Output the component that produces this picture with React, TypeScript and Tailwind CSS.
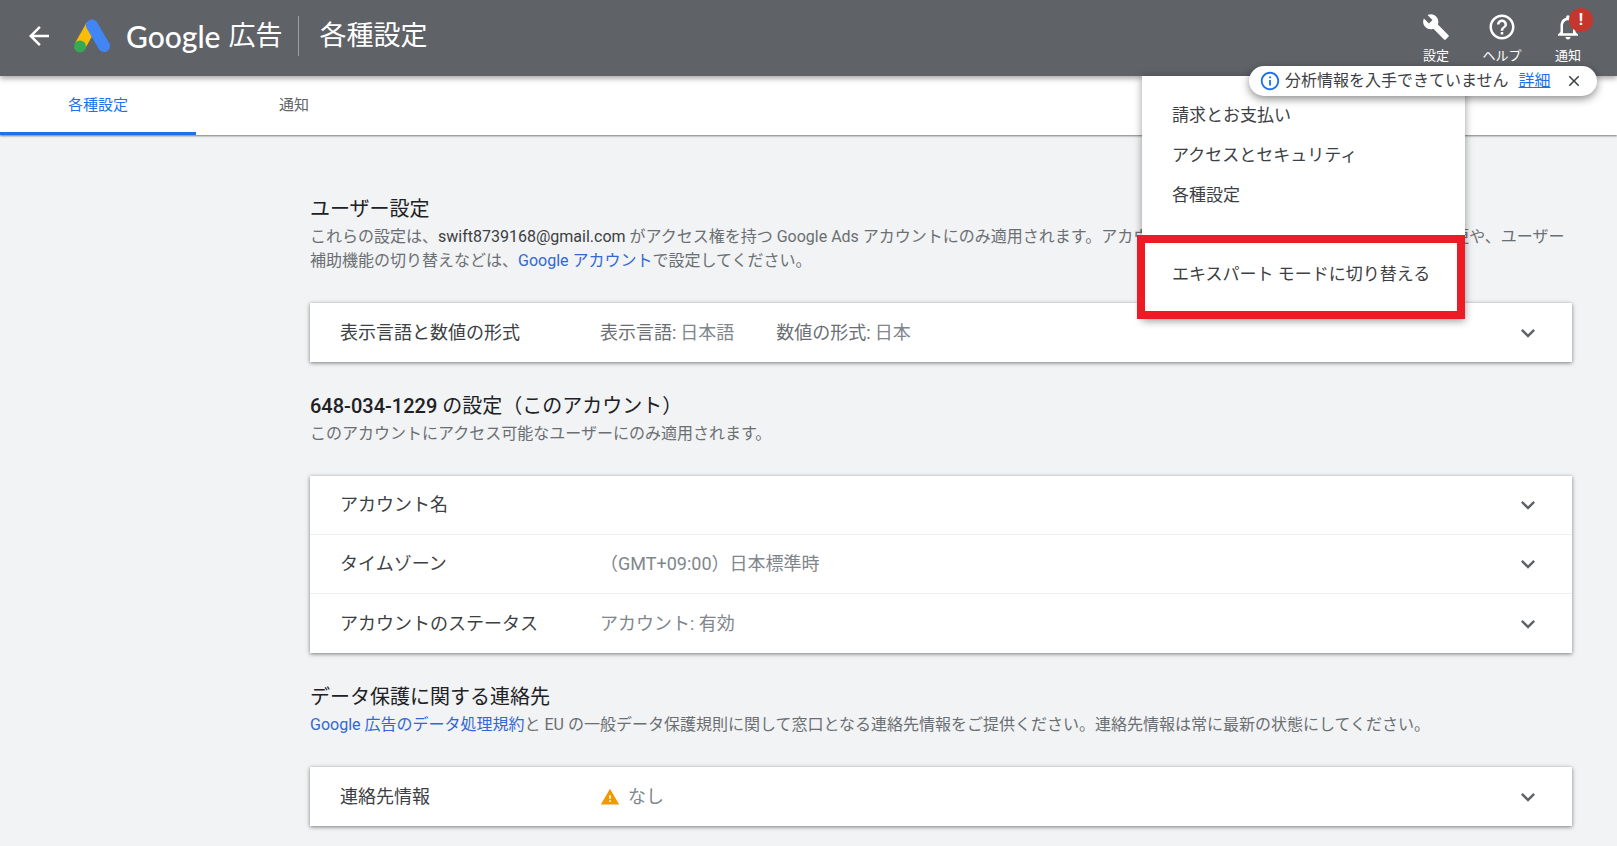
import { useState } from "react";
import {
  MdArrowBack,
  MdBuild,
  MdClose,
  MdHelpOutline,
  MdInfoOutline,
  MdKeyboardArrowDown,
  MdNotificationsNone,
  MdWarning,
} from "react-icons/md";

type Row = {
  label: string;
  values?: { name?: string; value: string }[];
  warning?: boolean;
};

const languageRows: Row[] = [
  {
    label: "表示言語と数値の形式",
    values: [
      { name: "表示言語:", value: "日本語" },
      { name: "数値の形式:", value: "日本" },
    ],
  },
];

const accountRows: Row[] = [
  { label: "アカウント名" },
  { label: "タイムゾーン", values: [{ value: "（GMT+09:00）日本標準時" }] },
  {
    label: "アカウントのステータス",
    values: [{ value: "アカウント: 有効" }],
  },
];

const contactRows: Row[] = [
  { label: "連絡先情報", values: [{ value: "なし" }], warning: true },
];

const menuItems = ["請求とお支払い", "アクセスとセキュリティ", "各種設定"];

export default function App() {
  const [noticeOpen, setNoticeOpen] = useState(true);

  return (
    <div className="relative min-h-screen bg-[#f1f3f4] font-[Roboto,'Noto_Sans_CJK_JP',sans-serif] text-[#3c4043]">
      <Header />
      <Tabs />

      <main className="space-y-7 pt-[58px] pr-[45px] pb-5 pl-[310px]">
        <section>
          <SectionTitle>ユーザー設定</SectionTitle>
          <p className="text-base leading-6 text-[#6b6f73]">
            これらの設定は、
            <span className="text-[#3c4043]">swift8739168@gmail.com</span>{" "}
            がアクセス権を持つ Google Ads
            アカウントにのみ適用されます。アカウントの個人情報等の編集、パスワードの変更や、ユーザー補助機能の切り替えなどは、
            <a href="#account" className="text-[#3367d6]">
              Google アカウント
            </a>
            で設定してください。
          </p>
          <Panel rows={languageRows} />
        </section>

        <section>
          <SectionTitle>
            <strong className="font-medium">648-034-1229</strong>{" "}
            の設定（このアカウント）
          </SectionTitle>
          <p className="text-base leading-6 text-[#6b6f73]">
            このアカウントにアクセス可能なユーザーにのみ適用されます。
          </p>
          <Panel rows={accountRows} />
        </section>

        <section>
          <SectionTitle>データ保護に関する連絡先</SectionTitle>
          <p className="text-base leading-6 text-[#6b6f73]">
            <a href="#terms" className="text-[#3367d6]">
              Google 広告のデータ処理規約
            </a>
            と EU
            の一般データ保護規則に関して窓口となる連絡先情報をご提供ください。連絡先情報は常に最新の状態にしてください。
          </p>
          <Panel rows={contactRows} />
        </section>
      </main>

      <SettingsMenu />
      {noticeOpen && <Notice onClose={() => setNoticeOpen(false)} />}
    </div>
  );
}

function Header() {
  return (
    <header className="relative z-10 flex h-[76px] items-center justify-between bg-[#5f6368] pr-4 pl-6 text-white shadow-[0_2px_6px_rgba(0,0,0,0.4)]">
      <div className="flex items-center pb-1">
        <button type="button" aria-label="戻る" className="mr-5">
          <MdArrowBack size={30} />
        </button>
        <AdsLogo />
        <span className="ml-4 flex items-center gap-2 text-[27px] leading-9">
          <span className="font-[Lato,sans-serif] text-[30px] font-medium">
            Google
          </span>
          広告
        </span>
        <h1 className="ml-4 border-l border-[#9aa0a6] pl-5 text-[27px] leading-10">
          各種設定
        </h1>
      </div>

      <nav className="flex text-[13px] leading-4">
        <HeaderAction label="設定" icon={<MdBuild size={28} />} />
        <HeaderAction label="ヘルプ" icon={<MdHelpOutline size={30} />} />
        <HeaderAction
          label="通知"
          icon={
            <>
              <MdNotificationsNone size={30} />
              <span className="absolute -top-1 right-2 flex size-6 items-center justify-center rounded-full bg-[#c5372c] text-base font-bold">
                !
              </span>
            </>
          }
        />
      </nav>
    </header>
  );
}

function HeaderAction({
  label,
  icon,
}: {
  label: string;
  icon: React.ReactNode;
}) {
  return (
    <button
      type="button"
      className="relative flex w-[66px] flex-col items-center gap-1.5"
    >
      <span className="flex h-[30px] items-center">{icon}</span>
      {label}
    </button>
  );
}

function AdsLogo() {
  return (
    <svg width="36" height="34" viewBox="0 0 36 34" aria-hidden="true">
      <path d="M6 27 17.5 6.5" stroke="#fbbc04" strokeWidth="11.5" />
      <path
        d="M18 6.5 30 27"
        stroke="#4285f4"
        strokeWidth="12"
        strokeLinecap="round"
      />
      <circle cx="6" cy="27.5" r="6" fill="#34a853" />
    </svg>
  );
}

function Tabs() {
  return (
    <nav className="flex h-[59px] bg-white text-[15px] shadow-[0_1px_2px_rgba(0,0,0,0.5)]">
      <a
        href="#settings"
        className="flex w-[196px] items-center justify-center border-b-3 border-[#1a73e8] pt-0.5 text-[#1a73e8]"
      >
        各種設定
      </a>
      <a
        href="#notifications"
        className="flex w-[196px] items-center justify-center border-b-3 border-transparent pt-0.5 text-[#5f6368]"
      >
        通知
      </a>
    </nav>
  );
}

function SectionTitle({ children }: { children: React.ReactNode }) {
  return <h2 className="text-xl leading-8 text-[#202124]">{children}</h2>;
}

function Panel({ rows }: { rows: Row[] }) {
  return (
    <div className="mt-[30px] divide-y divide-[#eeeeee] bg-white shadow-[0_1px_4px_rgba(0,0,0,0.5)]">
      {rows.map((row) => (
        <button
          key={row.label}
          type="button"
          className="flex h-[59px] w-full items-center px-[30px] text-left text-lg"
        >
          <span className="w-[260px]">{row.label}</span>
          <span className="flex flex-1 items-center gap-[42px] text-[#80868b]">
            {row.values?.map((item) => (
              <span key={item.value} className="flex items-center gap-1">
                {row.warning && (
                  <MdWarning size={20} className="mr-1 text-[#f29900]" />
                )}
                {item.name && (
                  <span className="text-[#6b6f73]">{item.name}</span>
                )}
                {item.value}
              </span>
            ))}
          </span>
          <MdKeyboardArrowDown size={28} className="text-[#5f6368]" />
        </button>
      ))}
    </div>
  );
}

function SettingsMenu() {
  return (
    <div className="absolute top-[76px] right-[152px] z-20 w-[323px] bg-white pt-5 text-[17px] shadow-[0_2px_8px_rgba(0,0,0,0.4)]">
      {menuItems.map((item) => (
        <button
          key={item}
          type="button"
          className="block h-10 w-full px-[30px] text-left"
        >
          {item}
        </button>
      ))}
      <div className="mt-[19px] -ml-[5px] border-8 border-[#ed1c24]">
        <button
          type="button"
          className="h-[68px] w-full pb-1 pl-[27px] text-left whitespace-nowrap"
        >
          エキスパート モードに切り替える
        </button>
      </div>
    </div>
  );
}

function Notice({ onClose }: { onClose: () => void }) {
  return (
    <div className="absolute top-[66px] right-5 z-30 flex h-[30px] w-[348px] items-center rounded-full bg-white pl-[10px] text-base shadow-[0_3px_8px_rgba(0,0,0,0.45)]">
      <MdInfoOutline size={22} className="mr-1 shrink-0 text-[#1a73e8]" />
      <span className="whitespace-nowrap">分析情報を入手できていません</span>
      <a href="#details" className="ml-2.5 text-[#1a73e8] underline">
        詳細
      </a>
      <button
        type="button"
        aria-label="閉じる"
        onClick={onClose}
        className="ml-3.5"
      >
        <MdClose size={18} />
      </button>
    </div>
  );
}
